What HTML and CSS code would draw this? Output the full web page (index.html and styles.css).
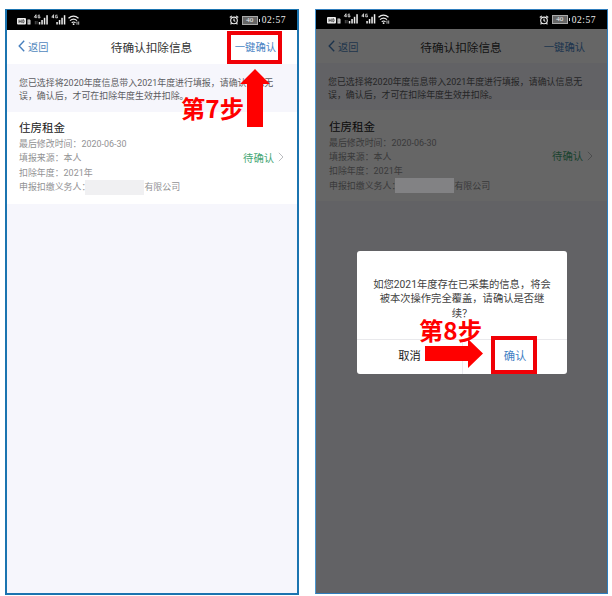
FILE: index.html
```
<!DOCTYPE html>
<html lang="zh-CN">
<head>
<meta charset="utf-8">
<title>待确认扣除信息</title>
<link rel="stylesheet" href="styles.css">
</head>
<body>
<svg class="defs" width="0" height="0">
  <symbol id="signals" viewBox="0 0 66 13">
    <rect x="0" y="4" width="9" height="6.5" rx="1" fill="#eee"/>
    <path d="M2 5.5v3.6M4.2 5.5v3.6M2 7.3h2.2M5.8 5.7v3.2h.8q1.2-1.6 0-3.2z" stroke="#222" stroke-width=".7" fill="none"/>
    <path d="M10.5 5.5h2.2l.8.8v4.2h-3z" fill="#ddd"/><path d="M11.3 7h1.2M11.3 8.8h1.2" stroke="#222" stroke-width=".6"/>
    <g id="bars" fill="#eee"><path d="M19 .7l-1.7 2.5h2.4M19 .7v3.5M23 1.2h-1.8v2.6h1.8V2.7h-.8" fill="none" stroke="#eee" stroke-width=".8"/><rect x="21.8" y="8" width="1.5" height="2.5"/><rect x="24.3" y="6" width="1.5" height="4.5"/><rect x="26.8" y="3.8" width="1.5" height="6.7"/><rect x="29.3" y="1.2" width="1.5" height="9.3"/></g>
    <path d="M18.3 7v3.3M20 7v3.3" stroke="#777" stroke-width=".7"/>
    <use href="#bars" x="17.5"/>
    <g fill="none" stroke="#eee" stroke-width="1.2"><path d="M51.5 4.3q5-4.3 10 0M53 6.6q3.6-3 7 0M54.7 8.8q2-1.6 3.8 0"/><path d="M60 7.5v3.2M61.7 7.5v3.2" stroke-width=".8"/></g>
    <circle cx="56.6" cy="10.2" r=".9" fill="#eee"/>
  </symbol>
  <symbol id="alarm" viewBox="0 0 10 10"><g fill="none" stroke="#eee" stroke-width="1.1"><circle cx="5" cy="5.4" r="3.3"/><path d="M5 3.4v2.2l1.3.8M.8 2.5l2-1.6M9.2 2.5l-2-1.6M2.5 8.2l-.9 1.1M7.5 8.2l.9 1.1"/></g></symbol>
  <symbol id="back" viewBox="0 0 7 12"><path d="M6.2.8L1.2 6l5 5.2" fill="none" stroke="#477fbe" stroke-width="1.4"/></symbol>
  <symbol id="next" viewBox="0 0 6 10"><path d="M.8.8L5 5 .8 9.2" fill="none" stroke="#bbbdc0" stroke-width="1"/></symbol>
</svg>
<main class="stage">
  <section class="phone">
    <header class="status">
      <svg class="signals"><use href="#signals"/></svg>
      <div class="right"><svg class="alarm"><use href="#alarm"/></svg><span class="battery">40</span><time>02:57</time></div>
    </header>
    <div class="screen">
      <nav class="nav">
        <span class="back"><svg><use href="#back"/></svg>返回</span>
        <h1>待确认扣除信息</h1>
        <span class="all">一键确认</span>
      </nav>
      <p class="notice">您已选择将2020年度信息带入2021年度进行填报，请确认信息无<br>误，确认后，才可在扣除年度生效并扣除。</p>
      <article class="card">
        <div class="info">
          <h2>住房租金</h2>
          <p>最后修改时间：2020-06-30</p>
          <p>填报来源：本人</p>
          <p>扣除年度：2021年</p>
          <p class="agent">申报扣缴义务人：<i></i>有限公司</p>
        </div>
        <span class="state">待确认<svg><use href="#next"/></svg></span>
      </article>
    </div>
  </section>

  <section class="phone dimmed">
    <header class="status">
      <svg class="signals"><use href="#signals"/></svg>
      <div class="right"><svg class="alarm"><use href="#alarm"/></svg><span class="battery">40</span><time>02:57</time></div>
    </header>
    <div class="screen">
      <nav class="nav">
        <span class="back"><svg><use href="#back"/></svg>返回</span>
        <h1>待确认扣除信息</h1>
        <span class="all">一键确认</span>
      </nav>
      <p class="notice">您已选择将2020年度信息带入2021年度进行填报，请确认信息无<br>误，确认后，才可在扣除年度生效并扣除。</p>
      <article class="card">
        <div class="info">
          <h2>住房租金</h2>
          <p>最后修改时间：2020-06-30</p>
          <p>填报来源：本人</p>
          <p>扣除年度：2021年</p>
          <p class="agent">申报扣缴义务人：<i></i>有限公司</p>
        </div>
        <span class="state">待确认<svg><use href="#next"/></svg></span>
      </article>
      <div class="mask"></div>
    </div>
    <div class="dialog">
      <p>如您2021年度存在已采集的信息，将会<br>被本次操作完全覆盖，请确认是否继<br>续？</p>
      <div class="actions"><span>取消</span><span class="ok">确认</span></div>
    </div>
  </section>

  <div class="frame frame-all"></div>
  <svg class="arrow arrow-up" viewBox="0 0 30 58"><path d="M15 0l15 15h-7v43H7V15H0z"/></svg>
  <strong class="step step-seven">第7步</strong>
  <strong class="step step-eight">第8步</strong>
  <svg class="arrow arrow-right" viewBox="0 0 58 30"><path d="M0 7h43V0l15 14.5L43 29v-7H0z"/></svg>
  <div class="frame frame-ok"></div>
</main>
</body>
</html>
```
FILE: styles.css
```
* { box-sizing: border-box; margin: 0; padding: 0; }
body {
  width: 612px; height: 596px; overflow: hidden; background: #fff;
  font-family: Roboto, "Noto Sans CJK SC", sans-serif;
}
.defs { position: absolute; }
.stage { position: relative; display: flex; gap: 16px; height: 596px; padding: 9px 0 0 5px; }
.phone {
  position: relative; display: flex; flex-direction: column;
  width: 294px; height: 586px; border: 2px solid #1b74b0; border-top-width: 1px; background: #f6f6fc;
}
.dimmed { width: 293px; height: 585px; border: 1px solid #2f7dbd; border-left-color: #4b97d0; }
.status {
  display: flex; align-items: center; justify-content: space-between;
  height: 20px; padding: 0 11px 0 10px; background: #000; flex: none;
}
.dimmed .status { height: 19px; padding: 0 11px; }
.signals { width: 66px; height: 13px; }
.right { display: flex; align-items: center; gap: 4px; color: #eee; }
.alarm { width: 10px; height: 10px; }
.battery {
  position: relative; width: 14px; height: 7px; background: #666; outline: 1px solid #aaa;
  font: 7px/7px "Liberation Serif", serif; text-align: center; color: #eee;
}
.battery::after { content: ""; position: absolute; left: 16px; top: 2px; width: 1px; height: 3px; background: #ddd; }
.right time { font: 9.5px/12px "Liberation Serif", serif; letter-spacing: .5px; margin-left: 1px; }
.screen { position: relative; flex: 1; background: #f6f6fc; }
.nav {
  display: grid; grid-template-columns: 80px 1fr 71px; align-items: center;
  height: 34px; padding: 0 21px 2px 11px; background: #fff;
}
.back { display: flex; align-items: center; gap: 3px; font-size: 10.2px; color: #5288bd; }
.back svg { width: 7px; height: 12px; }
h1 { font-size: 11.65px; font-weight: 400; color: #333; text-align: center; white-space: nowrap; }
.all { font-size: 10.3px; color: #4a84c4; text-align: right; }
.notice { height: 48px; padding: 13px 0 0 12px; font-size: 8.93px; line-height: 13px; color: #5c5c61; white-space: nowrap; }
.card {
  display: flex; align-items: center; justify-content: space-between;
  height: 92px; padding: 0 13px 2px 12px; background: #fff;
}
h2 { font-size: 11.5px; line-height: 18px; font-weight: 400; color: #222; }
.info p { font-size: 8.93px; line-height: 14.3px; color: #929294; white-space: nowrap; }
.agent { display: flex; align-items: center; }
.agent i { width: 59px; height: 15px; margin-left: -5px; background: #f0f0f2; }
.state { display: flex; align-items: center; gap: 4px; font-size: 10.3px; color: #46a776; }
.state svg { width: 6px; height: 10px; }
.dimmed .nav { padding: 0 22px 0 12px; }
.dimmed .card { height: 91px; padding: 0 14px 0 13px; }
.dimmed .notice { height: 47px; padding: 13px 0 0 12px; line-height: 13px; }
.dimmed .agent i { position: relative; z-index: 1; background: #828284; }
.mask { position: absolute; inset: 0; background: rgba(0, 0, 0, .6); }
.dialog {
  position: absolute; left: 41px; top: 241px; width: 210px; height: 123px;
  display: flex; flex-direction: column; background: #fff; border-radius: 3px; overflow: hidden;
}
.dialog p { height: 88px; padding-top: 27px; font-size: 10.3px; line-height: 14.3px; color: #3f3f3f; text-align: center; }
.actions { flex: 1; display: grid; grid-template-columns: 1fr 1fr; border-top: 1px solid #e9e9ec; }
.actions span { display: flex; align-items: center; justify-content: center; padding-bottom: 4px; font-size: 11.3px; color: #222; }
.actions .ok { color: #3f7fc4; border-left: 1px solid #ececf0; }
.frame { position: absolute; border: 4px solid #f00006; }
.frame-all { left: 227px; top: 31px; width: 55px; height: 33px; }
.frame-ok { left: 491px; top: 336px; width: 46px; height: 38px; }
.arrow { position: absolute; fill: #f00; }
.arrow-up { left: 240px; top: 69px; width: 30px; height: 58px; }
.arrow-right { left: 425px; top: 339px; width: 58px; height: 30px; }
.step {
  position: absolute; font: 700 24.3px/22px "Noto Sans CJK SC", sans-serif; color: #f00; white-space: nowrap;
}
.step-seven { left: 181px; top: 97px; }
.step-eight { left: 419px; top: 319px; }
```
